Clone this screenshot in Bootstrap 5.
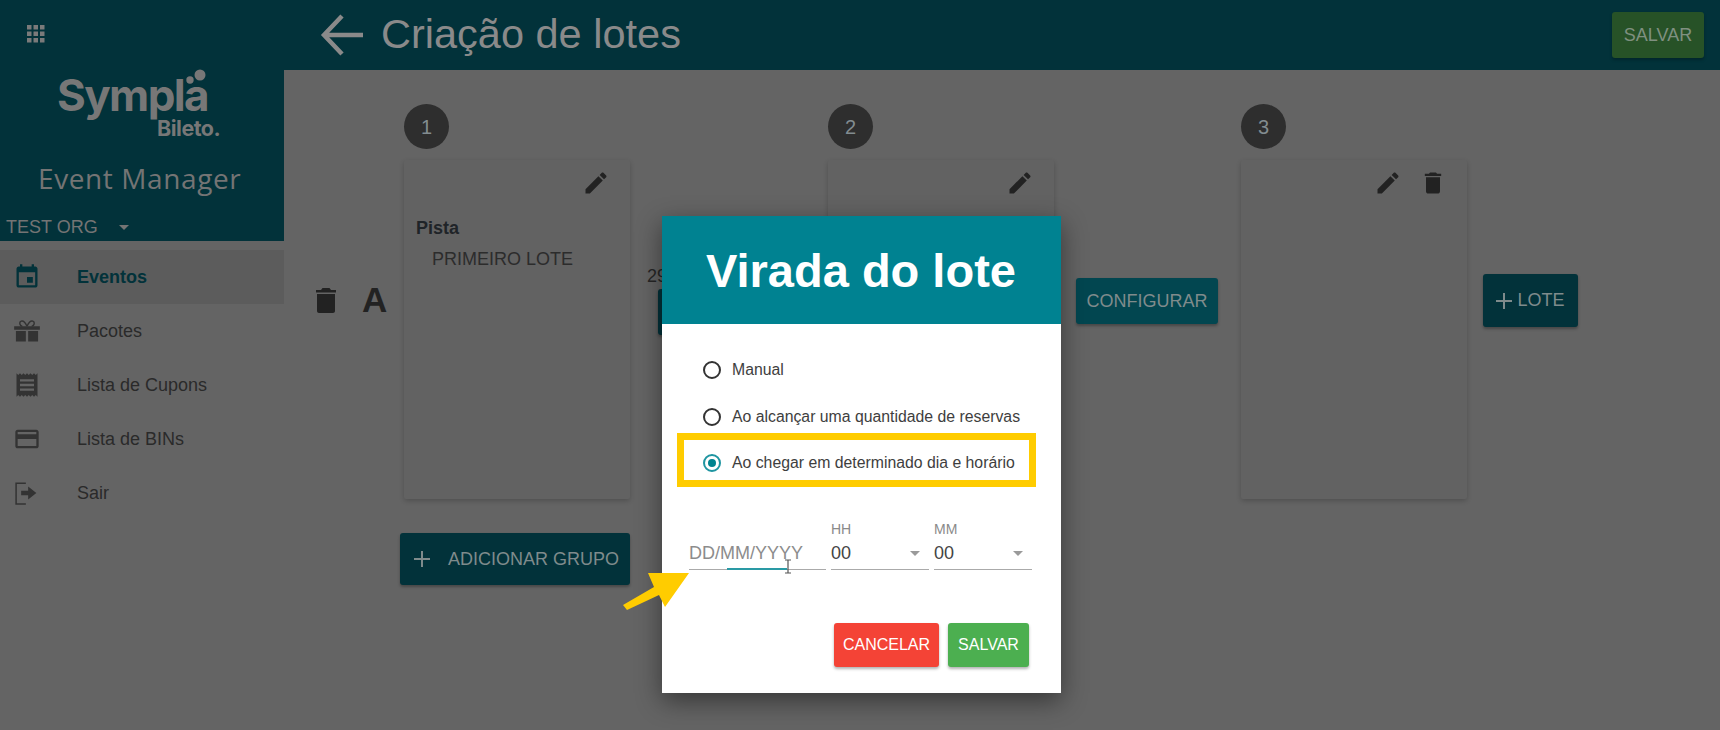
<!DOCTYPE html>
<html lang="pt-BR">

<head>
    <meta charset="UTF-8">
    <meta name="viewport" content="width=device-width, initial-scale=1.0">
    <title>Criação de lotes</title>
    <link href="https://cdn.jsdelivr.net/npm/bootstrap@5.3.0/dist/css/bootstrap.min.css" rel="stylesheet">
    <style>
        html, body { height: 730px; overflow: hidden; }
        body { background: #646464; color: #262626; font-family: "Liberation Sans", Arial, sans-serif; font-size: 16px; }

        .app-frame { display: flex; height: 730px; }

        /* sidebar */
        .side-col { width: 284px; flex: none; }
        .side-top { height: 241px; background: #02323a; color: #747474; }
        .apps-icon { padding: 24px 0 0 26px; height: 68px; }
        .apps-icon svg { display: block; }
        .brand-box { height: 93px; padding: 5px 0 0 57px; color: #777; font-family: "Inter", "Liberation Sans", sans-serif; font-weight: 700; }
        .brand-main { display: inline-block; font-size: 44px; line-height: 44px; letter-spacing: -1.6px; position: relative; }
        .brand-dots { position: absolute; left: 125px; top: -4px; }
        .brand-sub { font-size: 21.500px; line-height: 20px; letter-spacing: -.5px; margin: 1px 0 0 100px; }
        .manager-name { font-family: "Open Sans", sans-serif; font-size: 28px; line-height: 34px; letter-spacing: .6px; padding-left: 38px; margin: 0 0 20px; font-weight: 400; }
        .org-row { font-size: 18px; line-height: 24px; padding-left: 6px; display: flex; align-items: center; }
        .caret-small { width: 0; height: 0; border-left: 5px solid transparent; border-right: 5px solid transparent; border-top: 5px solid currentColor; margin-left: 21px; }
        .side-menu { padding-top: 9px; }
        .menu-row { display: flex; align-items: center; height: 54px; color: #2a2a2a; font-size: 18px; }
        .menu-row.is-active { background: #5c5c5c; color: #02323a; font-weight: 700; }
        .menu-ico { width: 77px; padding-left: 13px; flex: none; }
        .menu-ico svg { display: block; }

        /* main */
        .main-col { flex: 1; min-width: 0; display: flex; flex-direction: column; }
        .top-bar { height: 70px; flex: none; background: #02323a; display: flex; align-items: center; padding: 0 16px 0 36px; color: #8a8a8a; }
        .top-title { font-size: 41.500px; line-height: 1; margin: 0 0 2px 17px; font-weight: 400; }
        .btn-topsave { margin-left: auto; background: #275227; color: #7f9080; border: 0; border-radius: 3px; height: 46px; width: 92px; font-size: 18px; padding: 0; box-shadow: 0 2px 3px rgba(0,0,0,.25); }

        .lots-area { position: relative; display: flex; padding: 34px 0 0 120px; }
        .lot-col { width: 226px; flex: none; }
        .lot-num { width: 45px; height: 45px; border-radius: 50%; background: #2e2e2e; color: #828c90; display: flex; align-items: center; justify-content: center; font-size: 20px; margin-bottom: 11px; }
        .lot-card { height: 339px; background: #626262; border-radius: 2px; box-shadow: 0 2px 5px rgba(0,0,0,.2); position: relative; padding: 51px 12px 0; }
        .card-tools { position: absolute; top: 9px; right: 20px; display: flex; gap: 17px; }
        .card-tools svg { display: block; }
        .lot-group { font-weight: 700; font-size: 18px; line-height: 24px; color: #1f2428; margin-top: 5px; }
        .lot-item { line-height: 24px; padding-left: 16px; margin-top: 7px; color: #2c2c2c; font-size: 18px; }
        .lot-gap { width: 198px; flex: none; position: relative; padding: 160px 0 0 28px; font-size: 18px; line-height: 24px; }
        .lot-date { margin-left: -11px; }
        .lot-gap.is-second { width: 187px; padding: 0; }
        .btn-dark-teal { background: #02323a; color: #7f8b8c; border: 0; border-radius: 3px; box-shadow: 0 2px 3px rgba(0,0,0,.3); font-size: 18px; padding: 0; display: inline-flex; align-items: center; justify-content: center; }
        .btn-hidden-conf { width: 142px; height: 46px; margin-top: 1px; }
        .btn-conf { position: absolute; left: 22px; top: 174px; width: 142px; height: 46px; background: #024650; }
        .btn-lote { width: 95px; height: 53px; margin: 170px 0 0 16px; gap: 5px; }
        .group-tag { position: absolute; left: 30px; top: 212px; display: flex; align-items: center; gap: 24px; }
        .group-letter { font-weight: 700; font-size: 35px; line-height: 1; color: #222; }
        .btn-add-group { width: 230px; height: 52px; margin: 34px 0 0 116px; gap: 17px; padding-left: 2px; }

        /* modal over the page */
        .dialog-box { position: absolute; left: 662px; top: 216px; width: 399px; height: 477px; background: #fff; box-shadow: 0 8px 24px rgba(0,0,0,.45); display: flex; flex-direction: column; }
        .dialog-head { height: 108px; flex: none; background: #008291; color: #fff; display: flex; align-items: center; padding-left: 44px; }
        .dialog-head h2 { font-weight: 700; font-size: 47px; margin: 0; line-height: 1; }
        .dialog-body { flex: 1; padding: 23px 0 0 41px; position: relative; color: #3e3e3e; }
        .radio-row { display: flex; align-items: center; gap: 11px; height: 46.5px; font-size: 15.800px; }
        .radio-mark { width: 18px; height: 18px; border: 2px solid #333; border-radius: 50%; flex: none; }
        .radio-mark.is-on { border-color: #1f95a1; padding: 3px; }
        .radio-mark.is-on::after { content: ""; display: block; width: 8px; height: 8px; background: #00838f; border-radius: 50%; }
        .mark-box { position: absolute; left: 15px; top: 109px; width: 359px; height: 54px; border: 7px solid #fc0; }
        .time-row { display: flex; margin: 35px 0 0 -14px; gap: 5px; align-items: flex-end; }
        .date-col { width: 137px; }
        .time-col { width: 98px; }
        .field-label { font-size: 14px; line-height: 14px; color: #8a8a8a; }
        .field-value { position: relative; height: 34px; line-height: 34px; font-size: 18px; border-bottom: 1.5px solid #aaa; color: #444; }
        .date-col .field-value { color: #8c8c8c; }
        .focus-line { position: absolute; left: 38px; width: 60px; bottom: -1.5px; height: 2px; background: #2a9aa5; }
        .beam { position: absolute; left: 95px; top: 23px; }
        .caret-sel { position: absolute; right: 9px; top: 15px; width: 0; height: 0; border-left: 5px solid transparent; border-right: 5px solid transparent; border-top: 5px solid #9a9a9a; }
        .dialog-actions { position: absolute; top: 299px; right: 32px; display: flex; gap: 9px; }
        .btn-cancel, .btn-okay { height: 44px; border: 0; border-radius: 3px; color: #fff; font-size: 16px; padding: 0; box-shadow: 0 2px 3px rgba(0,0,0,.3); }
        .btn-cancel { background: #f44336; width: 105px; }
        .btn-okay { background: #4caf50; width: 81px; }
        .hint-arrow { position: absolute; left: 620px; top: 570px; }
    </style>
</head>

<body>

    <div class="app-frame">
        <aside class="side-col">
            <div class="side-top">
                <div class="apps-icon">
                    <svg width="20" height="20" viewBox="0 0 20 20" fill="#7a7a7a">
                        <rect x="1" y="1" width="4.5" height="4.5"/><rect x="7.5" y="1" width="4.5" height="4.5"/><rect x="14" y="1" width="4.5" height="4.5"/>
                        <rect x="1" y="7.5" width="4.5" height="4.5"/><rect x="7.5" y="7.5" width="4.5" height="4.5"/><rect x="14" y="7.5" width="4.5" height="4.5"/>
                        <rect x="1" y="14" width="4.5" height="4.5"/><rect x="7.5" y="14" width="4.5" height="4.5"/><rect x="14" y="14" width="4.5" height="4.5"/>
                    </svg>
                </div>
                <div class="brand-box">
                    <div class="brand-main">Sympla<svg class="brand-dots" width="24" height="16" viewBox="0 0 24 16" fill="#777"><circle cx="8" cy="11" r="3.7"/><circle cx="18" cy="6" r="5.500"/></svg></div>
                    <div class="brand-sub">Bileto.</div>
                </div>
                <h1 class="manager-name">Event Manager</h1>
                <div class="org-row">TEST ORG<span class="caret-small"></span></div>
            </div>
            <nav class="side-menu">
                <div class="menu-row is-active">
                    <span class="menu-ico"><svg width="28" height="28" viewBox="0 0 24 24" fill="#02323a"><path d="M17 12h-5v5h5v-5zM16 1v2H8V1H6v2H5c-1.11 0-1.99.9-1.99 2L3 19c0 1.1.89 2 2 2h14c1.1 0 2-.9 2-2V5c0-1.1-.9-2-2-2h-1V1h-2zm3 18H5V8h14v11z"/></svg></span>
                    Eventos
                </div>
                <div class="menu-row">
                    <span class="menu-ico"><svg width="28" height="28" viewBox="0 0 24 24" fill="#333"><path d="M1 8h22v3H1zM2.500 12h8.500v9H2.500zM13 12h8.500v9H13zM11 8h2v3h-2z"/><path d="M12 8C10.500 4.500 8.500 3 7 3.500 5 4.300 5.500 7.300 8 8M12 8c1.500-3.500 3.500-5 5-4.500 2 .8 1.500 3.800-1 4.500" fill="none" stroke="#333" stroke-width="1.200"/></svg></span>
                    Pacotes
                </div>
                <div class="menu-row">
                    <span class="menu-ico"><svg width="28" height="28" viewBox="0 0 24 24" fill="#333"><path d="M18 17H6v-2h12v2zm0-4H6v-2h12v2zm0-4H6V7h12v2zM3 22l1.500-1.500L6 22l1.500-1.500L9 22l1.500-1.500L12 22l1.500-1.500L15 22l1.500-1.500L18 22l1.500-1.500L21 22V2l-1.500 1.500L18 2l-1.500 1.500L15 2l-1.500 1.500L12 2l-1.500 1.500L9 2 7.500 3.500 6 2 4.500 3.500 3 2v20z"/></svg></span>
                    Lista de Cupons
                </div>
                <div class="menu-row">
                    <span class="menu-ico"><svg width="28" height="28" viewBox="0 0 24 24" fill="#333"><path d="M20 4H4c-1.110 0-1.990.890-1.990 2L2 18c0 1.110.890 2 2 2h16c1.110 0 2-.890 2-2V6c0-1.110-.890-2-2-2zm0 14H4v-6h16v6zm0-10H4V6h16v2z"/></svg></span>
                    Lista de BINs
                </div>
                <div class="menu-row">
                    <span class="menu-ico"><svg width="28" height="28" viewBox="0 0 24 24" fill="#333"><path d="M11 3H2v19h9v-1.300H3.300V4.300H11zM7 10h6V6.500l7 5.500-7 5.500V14H7z"/></svg></span>
                    Sair
                </div>
            </nav>
        </aside>

        <main class="main-col">
            <header class="top-bar">
                <svg width="44" height="44" viewBox="0 0 44 44" fill="none" stroke="#8a8a8a" stroke-width="4.500"><path d="M43 22H5M22 3L4 22l18 19"/></svg>
                <div class="top-title">Criação de lotes</div>
                <button type="button" class="btn-topsave">SALVAR</button>
            </header>

            <section class="lots-area">
                <div class="group-tag">
                    <svg width="24" height="26" viewBox="0 0 24 26" fill="#222"><path d="M3 24c0 1.100.900 2 2 2h14c1.100 0 2-.900 2-2V7H3v17zM22 3h-5l-1.500-2h-7L7 3H2v2.500h20V3z"/></svg>
                    <span class="group-letter">A</span>
                </div>

                <div class="lot-col">
                    <div class="lot-num">1</div>
                    <div class="lot-card">
                        <div class="card-tools">
                            <svg width="28" height="28" viewBox="0 0 24 24" fill="#222"><path d="M3 17.250V21h3.750L17.810 9.940l-3.750-3.750L3 17.250zM20.710 7.040c.390-.390.390-1.020 0-1.410l-2.340-2.340c-.390-.390-1.020-.390-1.410 0l-1.830 1.830 3.750 3.750 1.830-1.830z"/></svg>
                        </div>
                        <div class="lot-group">Pista</div>
                        <div class="lot-item">PRIMEIRO LOTE</div>
                    </div>
                </div>
                <div class="lot-gap">
                    <div class="lot-date">29</div>
                    <button type="button" class="btn-dark-teal btn-hidden-conf">CONFIGURAR</button>
                </div>
                <div class="lot-col">
                    <div class="lot-num">2</div>
                    <div class="lot-card">
                        <div class="card-tools">
                            <svg width="28" height="28" viewBox="0 0 24 24" fill="#222"><path d="M3 17.250V21h3.750L17.810 9.940l-3.750-3.750L3 17.250zM20.710 7.040c.390-.390.390-1.020 0-1.410l-2.340-2.340c-.390-.390-1.020-.390-1.410 0l-1.830 1.830 3.750 3.750 1.830-1.830z"/></svg>
                        </div>
                    </div>
                </div>
                <div class="lot-gap is-second">
                    <button type="button" class="btn-dark-teal btn-conf">CONFIGURAR</button>
                </div>
                <div class="lot-col">
                    <div class="lot-num">3</div>
                    <div class="lot-card">
                        <div class="card-tools">
                            <svg width="28" height="28" viewBox="0 0 24 24" fill="#222"><path d="M3 17.250V21h3.750L17.810 9.940l-3.750-3.750L3 17.250zM20.710 7.040c.390-.390.390-1.020 0-1.410l-2.340-2.340c-.390-.390-1.020-.390-1.410 0l-1.830 1.830 3.750 3.750 1.830-1.830z"/></svg>
                            <svg width="28" height="28" viewBox="0 0 24 24" fill="#222"><path d="M6 19c0 1.100.900 2 2 2h8c1.100 0 2-.900 2-2V7H6v12zM19 4h-3.500l-1-1h-5l-1 1H5v2h14V4z"/></svg>
                        </div>
                    </div>
                </div>
                <button type="button" class="btn-dark-teal btn-lote">
                    <svg width="16" height="16" viewBox="0 0 16 16" stroke="#7f8b8c" stroke-width="2"><path d="M8 0v16M0 8h16"/></svg>LOTE
                </button>
            </section>

            <div>
                <button type="button" class="btn-dark-teal btn-add-group">
                    <svg width="18" height="18" viewBox="0 0 18 18" stroke="#7f8b8c" stroke-width="2"><path d="M9 1v16M1 9h16"/></svg>ADICIONAR GRUPO
                </button>
            </div>
        </main>
    </div>

    <div class="dialog-box">
        <div class="dialog-head">
            <h2>Virada do lote</h2>
        </div>
        <div class="dialog-body">
            <div class="radio-row"><span class="radio-mark"></span>Manual</div>
            <div class="radio-row"><span class="radio-mark"></span>Ao alcançar uma quantidade de reservas</div>
            <div class="radio-row"><span class="radio-mark is-on"></span>Ao chegar em determinado dia e horário</div>
            <div class="mark-box"></div>

            <div class="time-row">
                <div class="date-col">
                    <div class="field-value">DD/MM/YYYY
                        <span class="focus-line"></span>
                        <svg class="beam" width="8" height="15" viewBox="0 0 8 15" fill="none" stroke="#555" stroke-width="1.200"><path d="M1 1h6M4 1v13M1 14h6"/></svg>
                    </div>
                </div>
                <div class="time-col">
                    <div class="field-label">HH</div>
                    <div class="field-value">00<span class="caret-sel"></span></div>
                </div>
                <div class="time-col">
                    <div class="field-label">MM</div>
                    <div class="field-value">00<span class="caret-sel"></span></div>
                </div>
            </div>

            <div class="dialog-actions">
                <button type="button" class="btn-cancel">CANCELAR</button>
                <button type="button" class="btn-okay">SALVAR</button>
            </div>
        </div>
    </div>

    <svg class="hint-arrow" width="72" height="42" viewBox="0 0 72 42" fill="#fc0"><path d="M69 3L45 37 39 25 7 40 3 35 34 17 28 3z"/></svg>

    <script src="https://cdn.jsdelivr.net/npm/bootstrap@5.3.0/dist/js/bootstrap.bundle.min.js"></script>
</body>

</html>
